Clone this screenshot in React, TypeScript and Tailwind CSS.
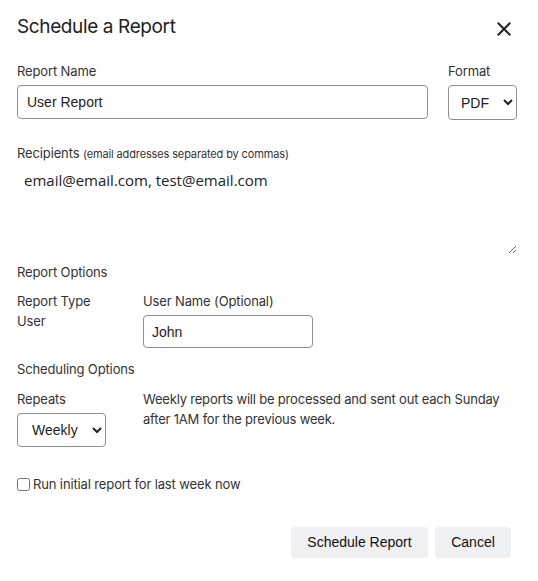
import React from 'react';

const labelFont = { fontFamily: 'Inter, "Liberation Sans", sans-serif' };
const fieldFont = { fontFamily: '"Liberation Sans", Arial, sans-serif' };

export default function App() {
  return (
    <div
      className="w-[538px] h-[581px] bg-white text-[#333] pl-[17px] pr-[21px] pt-[13px]"
      style={labelFont}
    >
      {/* header */}
      <div className="flex items-start justify-between h-[48px]">
        <h2 className="text-[19px] leading-[28px] tracking-[-0.02em] text-[#222]">Schedule a Report</h2>
        <button className="mt-[9px] mr-[6px] text-[#222]">
          <svg width="14" height="14" viewBox="0 0 14 14">
            <path d="M1.5 1.5L12.5 12.5M12.5 1.5L1.5 12.5" stroke="currentColor" strokeWidth="2" strokeLinecap="square" />
          </svg>
        </button>
      </div>

      {/* name + format */}
      <div className="flex gap-[20px]">
        <div className="flex-1 flex flex-col">
          <label className="text-[13px] leading-[20px] tracking-[-0.01em]">Report Name</label>
          <input
            defaultValue="User Report"
            className="mt-[4px] h-[34px] border border-[#8f8f8f] rounded-[4px] px-[9px] text-[14px] text-[#222]"
            style={fieldFont}
          />
        </div>
        <div className="flex flex-col w-[69px]">
          <label className="text-[13px] leading-[20px] tracking-[-0.01em]">Format</label>
          <select
            defaultValue="PDF"
            className="mt-[4px] h-[35px] border border-[#8f8f8f] rounded-[4px] pl-[8px] text-[14px] text-[#222]"
            style={fieldFont}
          >
            <option>PDF</option>
            <option>CSV</option>
          </select>
        </div>
      </div>

      {/* recipients */}
      <div className="mt-[23px] flex flex-col">
        <label className="text-[13px] leading-[20px] tracking-[-0.01em]">
          Recipients <span className="text-[11px]">(email addresses separated by commas)</span>
        </label>
        <textarea
          defaultValue="email@email.com, test@email.com"
          className="mt-[4px] h-[86px] w-full border-0 outline-none px-[7px] pt-[2px] text-[15px] leading-[20px] text-[#222]"
          style={{ fontFamily: '"Open Sans", "DejaVu Sans", sans-serif' }}
        />
      </div>

      {/* report options */}
      <div className="mt-[8px] text-[13px] leading-[20px] tracking-[-0.01em]">Report Options</div>
      <div className="mt-[9px] flex">
        <div className="w-[126px] flex flex-col text-[13px] leading-[20px] tracking-[-0.01em]">
          <span>Report Type</span>
          <span>User</span>
        </div>
        <div className="flex flex-col">
          <label className="text-[13px] leading-[20px] tracking-[-0.01em]">User Name (Optional)</label>
          <input
            defaultValue="John"
            className="mt-[4px] w-[170px] h-[33px] border border-[#8f8f8f] rounded-[4px] px-[8px] text-[14px] text-[#222]"
            style={fieldFont}
          />
        </div>
      </div>

      {/* scheduling options */}
      <div className="mt-[11px] text-[13px] leading-[20px] tracking-[-0.01em]">Scheduling Options</div>
      <div className="mt-[10px] flex">
        <div className="w-[126px] flex flex-col">
          <label className="text-[13px] leading-[20px] tracking-[-0.01em]">Repeats</label>
          <select
            defaultValue="Weekly"
            className="mt-[4px] w-[89px] h-[34px] border border-[#8f8f8f] rounded-[4px] pl-[10px] text-[14px] text-[#222]"
            style={fieldFont}
          >
            <option>Daily</option>
            <option>Weekly</option>
            <option>Monthly</option>
          </select>
        </div>
        <p className="text-[13px] leading-[20px] tracking-[-0.015em] w-[370px]">
          Weekly reports will be processed and sent out each Sunday after 1AM for the previous week.
        </p>
      </div>

      {/* checkbox */}
      <label className="mt-[27px] flex items-center gap-[3px] text-[13px] leading-[20px] tracking-[-0.01em]">
        <input type="checkbox" className="m-0 w-[13px] h-[13px]" />
        <span>Run initial report for last week now</span>
      </label>

      {/* footer */}
      <div className="mt-[33px] flex justify-end gap-[7px] pr-[6px]">
        <button
          className="h-[31px] w-[137px] rounded-[4px] bg-[#eff0f2] text-[14px] text-[#111]"
          style={fieldFont}
        >
          Schedule Report
        </button>
        <button
          className="h-[31px] w-[76px] rounded-[4px] bg-[#eff0f2] text-[14px] text-[#111]"
          style={fieldFont}
        >
          Cancel
        </button>
      </div>
    </div>
  );
}
